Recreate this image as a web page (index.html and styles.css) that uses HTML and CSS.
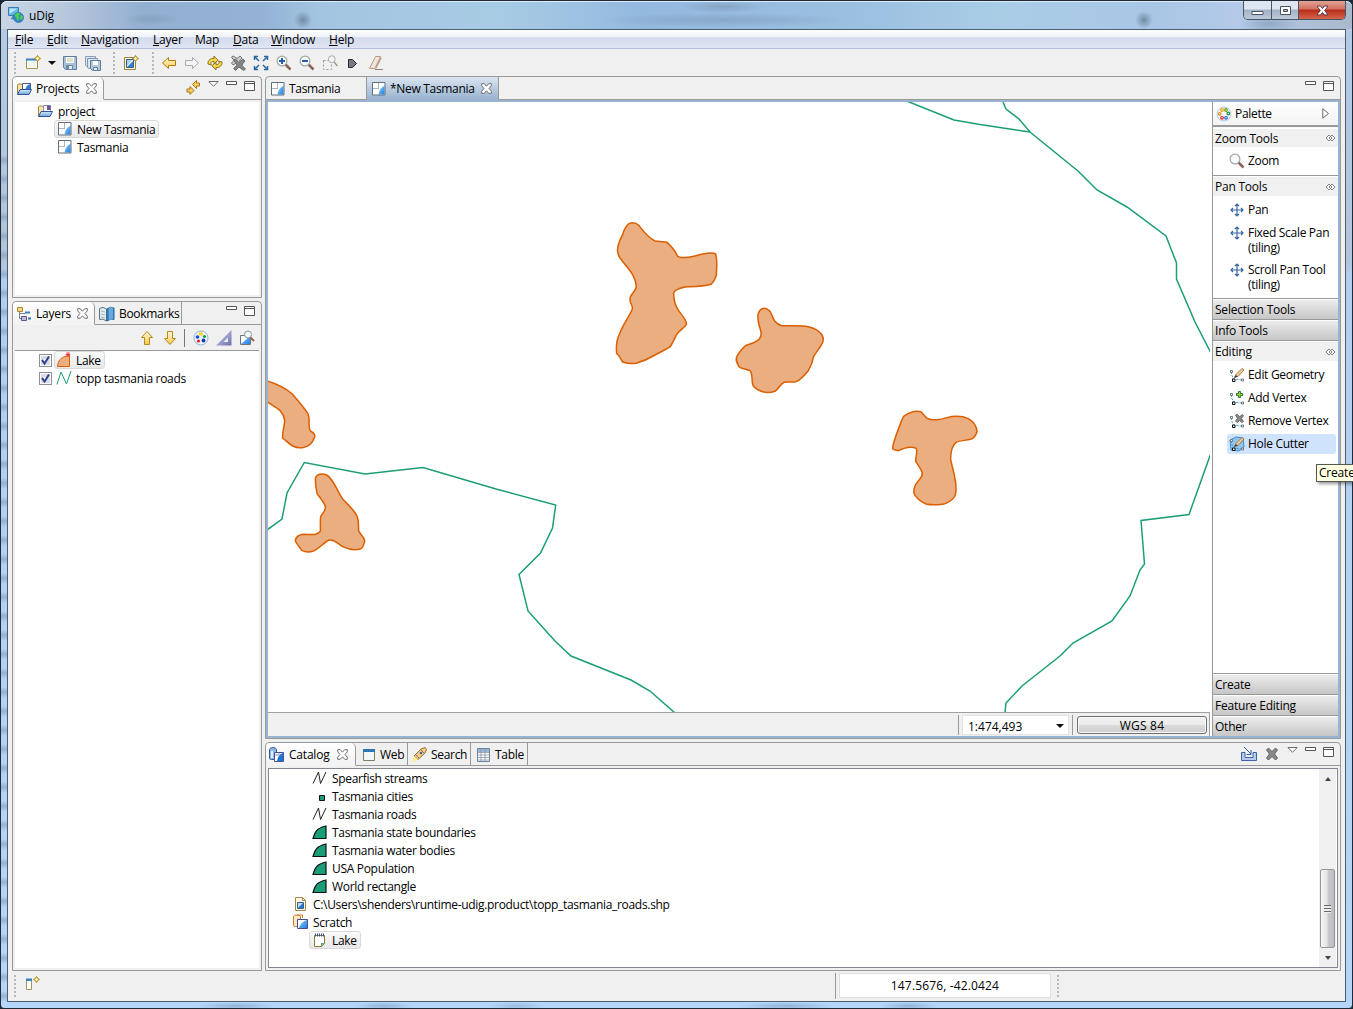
FILE: index.html
```html
<!DOCTYPE html>
<html lang="en">
<head>
<meta charset="utf-8">
<title>uDig</title>
<link rel="stylesheet" href="styles.css">
</head>
<body>
<svg class="defs" width="0" height="0" aria-hidden="true">
  <defs>
    <linearGradient id="gBlue" x1="0" y1="0" x2="1" y2="1"><stop offset="0" stop-color="#8fd0ff"/><stop offset="1" stop-color="#1f7fe0"/></linearGradient>
    <linearGradient id="gGold" x1="0" y1="0" x2="0" y2="1"><stop offset="0" stop-color="#fffbe0"/><stop offset="1" stop-color="#f5c848"/></linearGradient>
    <linearGradient id="gFolder" x1="0" y1="0" x2="0" y2="1"><stop offset="0" stop-color="#d8ebfb"/><stop offset="1" stop-color="#6ea3e0"/></linearGradient>
    <linearGradient id="gLav" x1="0" y1="0" x2="1" y2="1"><stop offset="0" stop-color="#d5d9f2"/><stop offset="1" stop-color="#6a6fae"/></linearGradient>
  </defs>
  <symbol id="app" viewBox="0 0 16 16"><path d="M.5 .5h10v8H.5z" fill="#5fb5e8" stroke="#3a7cb8"/><path d="M1.500 1.500h8L1.500 7z" fill="#b9e3fa"/><path d="M3 11.500h5M5 9v2" stroke="#4d86bb" stroke-width="1.500"/><circle cx="10.500" cy="10.500" r="5" fill="#2f86d0" stroke="#2a66a0" stroke-width=".7"/><path d="M6.500 8.500c1-3 4-3.500 6-1.500l-2 2 1 3-2 2-1-3zM12.500 8l2.500 1-1 4-2-1z" fill="#4fd04a"/></symbol>
  <symbol id="map" viewBox="0 0 14 14"><path d="M1 1h12v12H1z" fill="#fff"/><path d="M12.500 4c-3.500 1-5.500 5-6 8.500h6z" fill="url(#gBlue)"/><path d="M6.500 1v6M1 6.500h6" stroke="#a9b6bd"/><path d="M.5.500h12.500v12.500H.5z" fill="none" stroke="#5f6f7c"/></symbol>
  <symbol id="folder" viewBox="0 0 16 14"><path d="M1.500 12V3l1-1h3l1 1.500h2V12z" fill="#f8e6a8" stroke="#a8853a"/><path d="M6.500 1.500h8V9h-8z" fill="#fff" stroke="#505a8c"/><path d="M9 8c1-3 2-5 5-6v7H9z" fill="#2c7fdc"/><path d="M1.500 12.500L4 7.500h11.500L13 12.500z" fill="url(#gFolder)" stroke="#2f559d"/></symbol>
  <symbol id="project" viewBox="0 0 16 14"><path d="M1.500 12V3l1-1h3l1 1.500h2V12z" fill="#f8e6a8" stroke="#a8853a"/><path d="M6.500 1.500h7V9h-7z" fill="#fff" stroke="#8d8db0"/><path d="M10 1.500h3.500V6H10z" fill="#6c529b"/><path d="M1.500 12.500L4 7.500h11.500L13 12.500z" fill="url(#gFolder)" stroke="#2f559d"/></symbol>
  <symbol id="close" viewBox="0 0 11 11"><path d="M.7.700h2.600l2.200 2.500L7.700.700h2.600v2.100L8 5.500l2.300 2.700v2.100H7.700L5.500 7.800l-2.200 2.500H.7V8.200L3 5.500.7 2.800z" fill="#fff" stroke="#6f6f6f"/></symbol>
  <symbol id="min" viewBox="0 0 11 11"><path d="M.5 .5h10v3H.5z" fill="#fff" stroke="#555"/></symbol>
  <symbol id="max" viewBox="0 0 11 11"><path d="M.5.500h10v9H.5zM.5 2.500h10" fill="#fff" stroke="#555"/></symbol>
  <symbol id="tri" viewBox="0 0 11 11"><path d="M.8.500h9.400L5.500 5.200z" fill="#fff" stroke="#6b6b6b"/></symbol>
  <symbol id="star" viewBox="0 0 7 7"><path d="M3.500.500L4.600 2.400 6.500 3.500 4.600 4.600 3.500 6.500 2.400 4.600.500 3.500 2.400 2.400z" fill="#fff6b0" stroke="#a67c10"/></symbol>
  <symbol id="new" viewBox="0 0 16 16"><path d="M1.500 4.500h11v9h-11z" fill="#eff8fb" stroke="#ad9546"/><path d="M1 3.500h10v2H1z" fill="#3a83bd"/><use href="#star" x="9" y="0" width="7" height="7"/></symbol>
  <symbol id="save" viewBox="0 0 16 16"><path d="M1.500 1.500h13v13h-11l-2-2z" fill="#a9bfd5" stroke="#5e7d9e"/><path d="M4 2h8v6H4z" fill="#f8faf7"/><path d="M5 4h6M5 6h6" stroke="#c5c9a9"/><path d="M4.500 10.500h6v4h-6z" fill="#e4edf4" stroke="#6b86a2"/><path d="M6 11v3" stroke="#45698f" stroke-width="1.500"/></symbol>
  <symbol id="saveall" viewBox="0 0 16 16"><path d="M.5 1.500h10v10H2l-1.500-1z" fill="#dce5ec" stroke="#8ba0b2"/><path d="M2.500 3.500h10v10H4l-1.500-1z" fill="#dce5ec" stroke="#7f98ae"/><path d="M5.500 5.500h10v10h-8l-2-2z" fill="#b4c7d8" stroke="#5e7d9e"/><path d="M8 6h5v4H8z" fill="#fff"/><path d="M8.500 12.500h4v3h-4z" fill="#e4edf4" stroke="#5e7d9e"/></symbol>
  <symbol id="newmap" viewBox="0 0 16 16"><path d="M1.500 2.500h11v12h-11z" fill="#fff6d5" stroke="#9c8440"/><path d="M3.500 4.500h7v8h-7z" fill="#fff" stroke="#34608b"/><path d="M4 12l6-6v6z" fill="#2b83da"/><path d="M4 5h5L4 11z" fill="#a5d3f5"/><use href="#star" x="9" y="0" width="7" height="7"/></symbol>
  <symbol id="back" viewBox="0 0 16 16"><path d="M7.500 2.500v3h7v5h-7v3L1.500 8z" fill="url(#gGold)" stroke="#b67a10"/></symbol>
  <symbol id="fwd" viewBox="0 0 16 16"><path d="M8.500 2.500v3h-7v5h7v3L14.500 8z" fill="#f5f5f3" stroke="#aaa"/></symbol>
  <symbol id="refresh" viewBox="0 0 16 16"><path d="M1 9c-.5-4 3-6 6-5.500V1l4 4.200-4 3.600V6.500C4.500 6 3 8 4.500 10z" fill="#f5d64c" stroke="#806814" stroke-width=".9"/><path d="M15 7c.5 4-3 6-6 5.500V15l-4-4.200 4-3.600v2.300c2.500.5 4-1.500 2.500-3.500z" fill="#f5d64c" stroke="#806814" stroke-width=".9"/></symbol>
  <symbol id="stop" viewBox="0 0 16 16"><path d="M1.500 2l2-1L7 3.500 10 1l2 2-2.500 3L13 9l-2 2L6.500 8 3 10 1.500 8 4 5.500z" fill="#ccc" stroke="#777"/><path d="M3.500 5l2-1L9 7.500 13 4l2 2-3.500 4 4 4-2 1.500L9 12l-3.500 3.500-2-2L7 10z" fill="#858585" stroke="#6e6e6e"/></symbol>
  <symbol id="fit" viewBox="0 0 16 16"><path d="M1.500 5V1.500H5M11 1.500h3.500V5M14.500 11v3.500H11M5 14.500H1.500V11" fill="none" stroke="#28699f" stroke-width="1.500"/><path d="M2 2l4 4M14 2l-4 4M14 14l-4-4M2 14l4-4" stroke="#28699f" stroke-width="1.500"/></symbol>
  <symbol id="lens" viewBox="0 0 16 16"><path d="M9.500 9.500l5 5" stroke="#8c6255" stroke-width="2.500"/><circle cx="6" cy="6" r="4.900" fill="#f5fbff" stroke="#a6a7a3" stroke-width="1.200"/></symbol>
  <symbol id="zin" viewBox="0 0 16 16"><use href="#lens" width="16" height="16"/><path d="M3 6h6M6 3v6" stroke="#225caa" stroke-width="2"/></symbol>
  <symbol id="zout" viewBox="0 0 16 16"><use href="#lens" width="16" height="16"/><path d="M3 6h6" stroke="#225caa" stroke-width="2"/></symbol>
  <symbol id="zsel" viewBox="0 0 16 16"><path d="M1.500 5.500h8v9h-8z" fill="none" stroke="#999" stroke-dasharray="2 2"/><path d="M12 7l3.500 4" stroke="#9a9a9a" stroke-width="1.500"/><circle cx="9.800" cy="4.200" r="3.400" fill="#f6f6f6" stroke="#aaa"/></symbol>
  <symbol id="tag" viewBox="0 0 16 16"><path d="M3.500 4.500h4l4 4-4 4h-4z" fill="#777a84" stroke="#292929"/></symbol>
  <symbol id="eraser" viewBox="0 0 16 16"><path d="M7.500 1.500h5L7 13.500H1.500z" fill="#eee5dc" stroke="#bc9b86"/><path d="M12.500 1.500l1 2-5 10H7z" fill="#c29f8d"/><path d="M7 14.500h8" stroke="#8b817b"/></symbol>
  <symbol id="link" viewBox="0 0 14 16"><path d="M6.500 5.500l4-4v2.500h3v3h-3v2.500z" fill="#f7d25c" stroke="#ad7613"/><path d="M8 11.500l-4-4v2.500h-3v3h3v2.500z" fill="#f7d25c" stroke="#ad7613"/></symbol>
  <symbol id="layers" viewBox="0 0 16 16"><path d="M1.500 1.500h5v4h-5z" fill="#f7d889" stroke="#ae8537"/><path d="M3.500 6v6.500H6M3.500 7.500H9" fill="none" stroke="#75838c"/><path d="M9 5.500h5v2H9z" fill="#3a83bd"/><path d="M5.500 10.500h5v4h-5z" fill="#c4bddd" stroke="#5c5681"/><path d="M12 12.500h3" stroke="#2f78b4" stroke-width="2"/></symbol>
  <symbol id="book" viewBox="0 0 16 16"><path d="M.5 2.500Q4 0 7.500 3v12Q4 12 .5 13.500z" fill="#e3edf1" stroke="#5d7483"/><path d="M2 5l4 1M2 8l4 1M2 11l4 1" stroke="#a6b5bb"/><path d="M8 3q3-3 7-1v11.500q-4-1-7 1.500z" fill="#438fcd" stroke="#24619b"/><path d="M11 1v13M13 1v13" stroke="#8ac4ef"/></symbol>
  <symbol id="up" viewBox="0 0 16 16"><path d="M8 1.500L13.500 7.500h-3v7h-5v-7h-3z" fill="url(#gGold)" stroke="#b58618"/></symbol>
  <symbol id="down" viewBox="0 0 16 16"><path d="M8 14.500L13.500 8.500h-3v-7h-5v7h-3z" fill="url(#gGold)" stroke="#b58618"/></symbol>
  <symbol id="style" viewBox="0 0 16 16"><circle cx="8" cy="8" r="7" fill="#eef5fb" stroke="#92b6d4"/><path d="M6 2.500h4v3H6z" fill="#f2d80c"/><circle cx="4.500" cy="7" r="1.800" fill="#1449df"/><circle cx="5.500" cy="11" r="1.600" fill="#e12323"/><circle cx="11.500" cy="6.500" r="1.600" fill="#16a23a"/><circle cx="10.500" cy="10.500" r="1.900" fill="#1634b0"/></symbol>
  <symbol id="ruler" viewBox="0 0 16 16"><path d="M15.500 0v15.500H0zM12 7.500v4.500H7.500z" fill="url(#gLav)" fill-rule="evenodd"/></symbol>
  <symbol id="zlayer" viewBox="0 0 16 16"><path d="M1.500 5.500h10v9h-10z" fill="#fff" stroke="#6d747b"/><path d="M2 14L11 6v8z" fill="url(#gBlue)"/><path d="M11 7l4 4" stroke="#91624e" stroke-width="2"/><circle cx="9" cy="4.500" r="3.500" fill="#f3f8fa" stroke="#8e9395"/></symbol>
  <symbol id="lake" viewBox="0 0 16 16"><path d="M1.500 14.500C2 9 4 5 13.500 3.500v11z" fill="#ebae80" stroke="#d95f02"/><path d="M12 0v5M9.700 2.500h4.600M10.200.800l3.600 3.400M13.800.800l-3.600 3.400" stroke="#e5323c" stroke-width=".9"/></symbol>
  <symbol id="roads" viewBox="0 0 16 16"><path d="M1 14.500L5 2l5.500 12L15 1" fill="none" stroke="#1b9e77"/></symbol>
  <symbol id="line" viewBox="0 0 16 16"><path d="M1 13.500L6.500 2l2 11.500L14 2" fill="none" stroke="#222"/></symbol>
  <symbol id="point" viewBox="0 0 16 16"><path d="M7.500 7.500h5v5h-5z" fill="#1b9e77" stroke="#111"/></symbol>
  <symbol id="poly" viewBox="0 0 16 16"><path d="M1 14.500C3 9 3 4.500 14 2v12.500z" fill="#1b9e77" stroke="#111" stroke-width="1.200"/></symbol>
  <symbol id="shp" viewBox="0 0 16 16"><path d="M2.500 1.500h7l3 3v10h-10z" fill="#fffaea" stroke="#a58743"/><path d="M9.500 1.500v3h3" fill="none" stroke="#a58743"/><path d="M4.500 6.500h6v6h-6z" fill="#b5ddfc" stroke="#3a5f8c"/><path d="M5 12l5-5v5z" fill="#2777d2"/></symbol>
  <symbol id="scratch" viewBox="0 0 16 16"><path d="M.5 2.500C1 .5 7 .5 7.500 2.500v10h-5c-2 0-2-1-2-1z" fill="#f7e7c9" stroke="#d07b21"/><path d="M4 1h5.500v3" fill="none" stroke="#d07b21"/><path d="M4.500 5.500h10v9h-10z" fill="#fff" stroke="#4a4e8a"/><path d="M6 14c1-4 4-7 8-8v8z" fill="url(#gBlue)"/></symbol>
  <symbol id="catalog" viewBox="0 0 16 16"><path d="M.5 2.500C1 0 7 0 7.500 2.500v10h-5c-2 0-2-1-2-1z" fill="#8db8ea" stroke="#34588f"/><path d="M3 4v7" stroke="#e2effb" stroke-width="2"/><path d="M5.500 5.500h9v9h-9z" fill="#fff" stroke="#4553a0"/><path d="M8 14c1-5 3-7 6-8v8z" fill="#1e75cf"/><path d="M6 8h4V6" stroke="#a78fc7" fill="none"/></symbol>
  <symbol id="note" viewBox="0 0 16 16"><path d="M2.500 3.500h10v8l-3 3h-7z" fill="#fff" stroke="#8c7b35"/><path d="M12.500 11l-3.500 3.500V11z" fill="#54ad7c"/><path d="M3.500 1.500v3M5.500 1.500v3M7.500 1.500v3M9.500 1.500v3M11.500 1.500v3" stroke="#34558a"/></symbol>
  <symbol id="web" viewBox="0 0 14 14"><path d="M1.500 1.500h11v11h-11z" fill="#f2f8fa" stroke="#7b7f5f"/><path d="M1 1h12v3H1z" fill="#2e75b3"/></symbol>
  <symbol id="torch" viewBox="0 0 16 16"><path d="M3 9l7-7 4-1.500 1.500 2L14 6l-7 6.500z" fill="#f0c987" stroke="#9f6c2d"/><path d="M10 3l3 3M5 8l3 3" stroke="#9a7561"/><path d="M3 9l4 3.500L1 15.500z" fill="#ffef8b"/><circle cx="10" cy="6" r="1.300" fill="#376aa7"/></symbol>
  <symbol id="table" viewBox="0 0 14 14"><path d="M.5.500h12v13H.5z" fill="#fff" stroke="#6882a2"/><path d="M1 1h11v3H1z" fill="#9bb6d2"/><path d="M.5 4.500h12M.5 7h12M.5 9.500h12M.5 12h12M4 1v12M8 1v12" stroke="#8495a8" stroke-width=".8"/></symbol>
  <symbol id="import" viewBox="0 0 16 16"><path d="M1 6.500h3v5h8v-5h3.500v8H.5v-8z" fill="#b9cbed" stroke="#3d65a6"/><path d="M3 1l7 7M10 4v4.500H5.500" fill="none" stroke="#2f5f9b"/></symbol>
  <symbol id="delete" viewBox="0 0 16 16"><path d="M2.500 4l2-2L8 5.500 11.500 2l2 2-3 4 3 4-2 2L8 10.500 4.500 14l-2-2 3-4z" fill="#888" stroke="#656565"/></symbol>
  <symbol id="palette" viewBox="0 0 16 16"><circle cx="8" cy="8" r="7" fill="#f3f7ff" stroke="#b3cbea"/><g fill="#fff" stroke-width="1.200"><circle cx="6" cy="4" r="1.300" stroke="#e9a500"/><circle cx="10" cy="4" r="1.300" stroke="#65a007"/><circle cx="12.300" cy="7.500" r="1.300" stroke="#21943a"/><circle cx="10" cy="11.800" r="1.300" stroke="#2163df"/><circle cx="6" cy="11.800" r="1.300" stroke="#e72323"/><circle cx="3.700" cy="7.800" r="1.300" stroke="#ec8a00"/></g></symbol>
  <symbol id="pan" viewBox="0 0 14 14"><path d="M7 1v12M1 7h12M5 3l2-2 2 2M5 11l2 2 2-2M3 5L1 7l2 2M11 5l2 2-2 2" fill="none" stroke="#3767a4" stroke-width="1.200"/></symbol>
  <symbol id="pin" viewBox="0 0 11 8"><path d="M4 1L1 4l3 3 3-3zM7 1L4 4l3 3 3-3z" fill="#fff" fill-opacity=".4" stroke="#777" stroke-width=".9"/></symbol>
  <symbol id="vertex" viewBox="0 0 16 16"><path d="M2.500 4.500v3l2 4.500L13 13" fill="none" stroke="#48a0da" stroke-dasharray="2.500 1"/><path d="M1.500 3.500h2v2h-2zM12.500 12h2v2h-2z" fill="#fff" stroke="#777"/><path d="M3.500 12h2.500v2.500H3.500z" fill="#fff" stroke="#111"/></symbol>
  <symbol id="pencil" viewBox="0 0 16 16"><path d="M5.500 10.500L7 7.500l6-6 2 1.500-6 6.500z" fill="#efcc91" stroke="#9b6d3d" stroke-width=".9"/><path d="M5 11l2-3 1.500 1.500z" fill="#333"/></symbol>
  <symbol id="edit" viewBox="0 0 16 16"><use href="#vertex" width="16" height="16"/><use href="#pencil" width="16" height="16"/></symbol>
  <symbol id="addv" viewBox="0 0 16 16"><use href="#vertex" width="16" height="16"/><path d="M9.500 1.500h2v2h2v2h-2v2h-2v-2h-2v-2h2z" fill="#a3cf4b" stroke="#287b28"/></symbol>
  <symbol id="remv" viewBox="0 0 16 16"><use href="#vertex" width="16" height="16"/><path d="M6.500 2l2-.5L10.500 4 13 1.500l1.500 1L12.500 5.500l2 3-1.500 1-2.500-2L8 9.500 6.500 8l2-2.500z" fill="#888" stroke="#696969"/></symbol>
  <symbol id="hole" viewBox="0 0 16 16"><path d="M1 4l6-3 7 1 1 9-5 4-8-1z" fill="#8fc5f0" stroke="#3e8cd0"/><use href="#vertex" width="16" height="16"/><use href="#pencil" width="16" height="16"/></symbol>
  <symbol id="fastview" viewBox="0 0 16 16"><path d="M1.500 3.500h5v10h-5z" fill="#fff" stroke="#a29564"/><path d="M1 2.500h6v2.500H1z" fill="#3a83bd"/><use href="#star" x="8" y="0" width="7" height="7"/></symbol>
</svg>

<div class="window">
  <header class="titlebar">
    <svg class="i16"><use href="#app"/></svg>
    <span class="title">uDig</span>
    <div class="caption">
      <span class="cap"><svg width="13" height="12" viewBox="0 0 13 12"><path d="M1 6.500h11v3H1z" fill="#fff" stroke="#4b5261"/></svg></span>
      <span class="cap"><svg width="13" height="12" viewBox="0 0 13 12"><path d="M1.500 1.500h10v8h-10zM4.500 4.500h4v2h-4z" fill="#fff" fill-rule="evenodd" stroke="#4b5261"/></svg></span>
      <span class="cap cap-close"><svg width="13" height="12" viewBox="0 0 13 12"><path d="M1.500 1h3l2 2.500L8.500 1h3v1L8.600 5.500l2.900 3.500v1h-3l-2-2.500-2 2.500h-3V9l2.900-3.500L1.500 2z" fill="#fff" stroke="#5b3540"/></svg></span>
    </div>
  </header>

  <div class="client">
    <nav class="menubar">
      <span><u>F</u>ile</span><span><u>E</u>dit</span><span><u>N</u>avigation</span><span><u>L</u>ayer</span><span>Map</span><span><u>D</u>ata</span><span><u>W</u>indow</span><span><u>H</u>elp</span>
    </nav>
    <div class="toolbar">
      <i class="grip"></i>
      <div class="tools t1"><svg class="i16"><use href="#new"/></svg><i class="drop"></i><svg class="i16"><use href="#save"/></svg><svg class="i16"><use href="#saveall"/></svg></div>
      <i class="grip"></i>
      <div class="tools t2"><svg class="i16"><use href="#newmap"/></svg></div>
      <i class="grip"></i>
      <div class="tools t3">
        <svg class="i16"><use href="#back"/></svg><svg class="i16"><use href="#fwd"/></svg><svg class="i16"><use href="#refresh"/></svg><svg class="i16"><use href="#stop"/></svg><svg class="i16"><use href="#fit"/></svg><svg class="i16"><use href="#zin"/></svg><svg class="i16"><use href="#zout"/></svg><svg class="i16"><use href="#zsel"/></svg><svg class="i16"><use href="#tag"/></svg><svg class="i16"><use href="#eraser"/></svg>
      </div>
    </div>

    <main class="workbench">
      <div class="left">
        <section class="panel projects">
          <div class="tabs">
            <div class="tab active tab-projects"><svg class="folder"><use href="#folder"/></svg><span>Projects</span><svg class="x"><use href="#close"/></svg></div>
            <div class="view-tools"><svg class="link"><use href="#link"/></svg><svg class="i11"><use href="#tri"/></svg><svg class="i11"><use href="#min"/></svg><svg class="i11"><use href="#max"/></svg></div>
          </div>
          <div class="tree">
            <div class="row lvl1"><svg class="folder"><use href="#project"/></svg><span>project</span></div>
            <div class="row lvl2"><div class="pick selected"><svg class="i14"><use href="#map"/></svg><span>New Tasmania</span></div></div>
            <div class="row lvl2"><div class="pick"><svg class="i14"><use href="#map"/></svg><span>Tasmania</span></div></div>
          </div>
        </section>

        <section class="panel layers">
          <div class="tabs">
            <div class="tab active tab-layers"><svg class="i16"><use href="#layers"/></svg><span>Layers</span><svg class="x"><use href="#close"/></svg></div>
            <div class="tab tab-bookmarks"><svg class="i16"><use href="#book"/></svg><span>Bookmarks</span></div>
            <div class="view-tools"><svg class="i11"><use href="#min"/></svg><svg class="i11"><use href="#max"/></svg></div>
          </div>
          <div class="layer-tools">
            <svg class="i16"><use href="#up"/></svg><svg class="i16"><use href="#down"/></svg><i class="sep"></i><svg class="i16"><use href="#style"/></svg><svg class="i16"><use href="#ruler"/></svg><svg class="i16"><use href="#zlayer"/></svg>
          </div>
          <div class="tree layer-tree">
            <div class="row"><i class="check"><svg viewBox="0 0 11 11"><path d="M2 5l2.500 3.500L9 1.500" fill="none" stroke="#2e3f8f" stroke-width="2"/></svg></i><div class="pick selected"><svg class="i16"><use href="#lake"/></svg><span>Lake</span></div></div>
            <div class="row"><i class="check"><svg viewBox="0 0 11 11"><path d="M2 5l2.500 3.500L9 1.500" fill="none" stroke="#2e3f8f" stroke-width="2"/></svg></i><div class="pick"><svg class="i16"><use href="#roads"/></svg><span>topp tasmania roads</span></div></div>
          </div>
        </section>
      </div>

      <div class="right">
        <section class="panel editor">
          <div class="tabs">
            <div class="tab tab-tas"><svg class="i14"><use href="#map"/></svg><span>Tasmania</span></div>
            <div class="tab tab-new"><svg class="i14"><use href="#map"/></svg><span>*New Tasmania</span><svg class="x"><use href="#close"/></svg></div>
            <div class="view-tools"><svg class="i11"><use href="#min"/></svg><svg class="i11"><use href="#max"/></svg></div>
          </div>
          <div class="editor-body">
            <div class="map-area">
              <svg class="map" viewBox="268 102 942 610">
                <g class="road">
                  <path d="M908 101.500L954 120 980 124.500 1030 132"/>
                  <path d="M1003 102L1006 109 1019 119 1030 132 1078 171 1097 190 1127 207 1166 236 1176.500 263 1176.500 279 1195 322 1211 353"/>
                  <path d="M1211 453L1189 514.500 1141 520.500 1144.500 564 1140 570 1130 596 1112 621 1073 643 1060 656 1022 686 1006 703 1005 713"/>
                  <path d="M267 530L282 519 287 493 304.300 462.500 365 474 423 467.500 496 489 555.700 505 552.500 528 540.500 553 519 574.500 528 611 555 641 571 656 631 680 650 691 675 713"/>
                </g>
                <g class="water">
                  <path transform="translate(600 210) scale(.33333)" d="M88 40C96 37 108 38 116 46C128 60 140 80 165 93L201 97C215 110 226 122 232 137C240 147 262 143 285 138C305 132 330 124 346 131C353 145 350 170 349 196C345 208 340 217 333 223C310 230 280 230 255 231C235 235 222 240 221 250C221 275 228 292 238 305C248 318 262 333 259 344C250 356 238 362 230 373C222 390 216 402 210 411C195 421 180 426 165 435C145 447 125 455 108 460C95 462 80 460 68 456C62 448 58 436 50 430C47 400 52 385 62 363C72 340 88 318 97 297C99 285 90 283 90 268C88 255 108 245 109 230C107 195 85 178 60 144C50 130 50 115 58 95C62 82 70 75 71 64C75 55 80 45 88 40Z"/>
                  <path transform="translate(600 210) scale(.33333)" d="M474 313C478 300 486 295 494 295C504 298 510 300 513 310C520 325 522 340 545 347C575 348 600 345 625 350C645 355 657 363 664 372C672 385 672 390 664 405C655 420 645 430 640 442C638 455 632 470 625 482C615 493 605 508 588 515C575 518 565 514 552 517C540 523 535 538 525 544C510 549 495 549 482 543C468 538 458 528 457 518C456 505 457 490 450 482C440 477 425 478 417 470C410 458 406 450 411 438C418 428 425 415 438 406C455 400 470 397 478 387C488 375 482 360 477 345C474 332 473 323 474 313Z"/>
                  <path transform="translate(880 400) scale(.33333)" d="M72 48C82 40 105 30 122 35C130 41 134 50 142 55C155 62 180 60 200 53C220 48 245 47 265 56C280 65 290 78 291 95C288 105 282 115 272 118C255 122 240 121 228 127C215 137 212 155 212 178C217 205 228 235 228 262C229 275 226 290 218 297C208 305 200 312 188 313C170 315 150 315 138 312C120 305 105 290 102 280C98 262 110 248 121 235C133 222 126 212 107 184C108 165 113 155 109 145C95 139 75 142 55 152C45 150 38 150 38 145C38 130 50 100 67 56Z"/>
                  <path transform="translate(260 370) scale(.33333)" d="M5 27L24 34C50 42 80 58 97 72C110 87 130 110 144 131C152 150 142 165 151 183C160 187 166 192 164 202C158 218 145 232 127 233C100 236 90 222 68 204C66 185 75 165 74 150C68 118 45 112 24 97L5 86Z"/>
                  <path transform="translate(260 370) scale(.33333)" d="M166 325C170 312 185 309 200 315C220 325 232 365 248 387C265 405 280 418 290 436C297 450 295 465 296 483C303 495 315 505 314 514C310 525 310 533 303 536C285 542 265 538 248 530C230 520 225 508 208 510C195 514 180 535 158 544C145 548 135 546 125 541C118 530 108 520 106 512C108 500 118 494 130 493C150 493 170 498 181 484C182 470 180 455 182 440C187 430 197 425 196 410C192 395 180 385 171 370C167 355 166 340 166 325Z"/>
                </g>
              </svg>
              <div class="map-status">
                <div class="scale"><span>1:474,493</span><i class="drop"></i></div>
                <i class="vsep"></i>
                <div class="crs">WGS 84</div>
              </div>
            </div>
            <aside class="palette">
              <div class="pal-title"><svg class="i16"><use href="#palette"/></svg><span>Palette</span><svg width="8" height="11" viewBox="0 0 8 11"><path d="M.8.800v9.400L6.500 5.500z" fill="#fff" stroke="#6b6b6b"/></svg></div>
              <div class="drawer open"><span>Zoom Tools</span><svg class="pin"><use href="#pin"/></svg></div>
              <div class="pal-items zoom"><div class="item"><svg class="i16"><use href="#lens"/></svg><span>Zoom</span></div></div>
              <div class="drawer open"><span>Pan Tools</span><svg class="pin"><use href="#pin"/></svg></div>
              <div class="pal-items pans">
                <div class="item"><svg class="i14"><use href="#pan"/></svg><span>Pan</span></div>
                <div class="item two"><svg class="i14"><use href="#pan"/></svg><span>Fixed Scale Pan<br>(tiling)</span></div>
                <div class="item two"><svg class="i14"><use href="#pan"/></svg><span>Scroll Pan Tool<br>(tiling)</span></div>
              </div>
              <div class="drawer"><span>Selection Tools</span></div>
              <div class="drawer"><span>Info Tools</span></div>
              <div class="drawer open"><span>Editing</span><svg class="pin"><use href="#pin"/></svg></div>
              <div class="pal-items editing">
                <div class="item"><svg class="i16"><use href="#edit"/></svg><span>Edit Geometry</span></div>
                <div class="item"><svg class="i16"><use href="#addv"/></svg><span>Add Vertex</span></div>
                <div class="item"><svg class="i16"><use href="#remv"/></svg><span>Remove Vertex</span></div>
                <div class="item hot"><svg class="i16"><use href="#hole"/></svg><span>Hole Cutter</span></div>
              </div>
              <div class="drawer"><span>Create</span></div>
              <div class="drawer"><span>Feature Editing</span></div>
              <div class="drawer"><span>Other</span></div>
            </aside>
          </div>
        </section>

        <section class="panel catalog">
          <div class="tabs">
            <div class="tab active tab-catalog"><svg class="i16"><use href="#catalog"/></svg><span>Catalog</span><svg class="x"><use href="#close"/></svg></div>
            <div class="tab tab-web"><svg class="i14"><use href="#web"/></svg><span>Web</span></div>
            <div class="tab tab-search"><svg class="i16"><use href="#torch"/></svg><span>Search</span></div>
            <div class="tab tab-table"><svg class="i14"><use href="#table"/></svg><span>Table</span></div>
            <div class="view-tools"><svg class="i16"><use href="#import"/></svg><svg class="i16"><use href="#delete"/></svg><svg class="i11"><use href="#tri"/></svg><svg class="i11"><use href="#min"/></svg><svg class="i11"><use href="#max"/></svg></div>
          </div>
          <div class="catalog-box">
            <div class="catalog-tree">
              <div class="row c2"><svg class="i16"><use href="#line"/></svg><span>Spearfish streams</span></div>
              <div class="row c2"><svg class="i16"><use href="#point"/></svg><span>Tasmania cities</span></div>
              <div class="row c2"><svg class="i16"><use href="#line"/></svg><span>Tasmania roads</span></div>
              <div class="row c2"><svg class="i16"><use href="#poly"/></svg><span>Tasmania state boundaries</span></div>
              <div class="row c2"><svg class="i16"><use href="#poly"/></svg><span>Tasmania water bodies</span></div>
              <div class="row c2"><svg class="i16"><use href="#poly"/></svg><span>USA Population</span></div>
              <div class="row c2"><svg class="i16"><use href="#poly"/></svg><span>World rectangle</span></div>
              <div class="row c1"><svg class="i16"><use href="#shp"/></svg><span>C:\Users\shenders\runtime-udig.product\topp_tasmania_roads.shp</span></div>
              <div class="row c1"><svg class="i16"><use href="#scratch"/></svg><span>Scratch</span></div>
              <div class="row c2"><div class="pick selected"><svg class="i16"><use href="#note"/></svg><span>Lake</span></div></div>
            </div>
            <div class="scrollbar"><i class="arrow up"></i><i class="thumb"></i><i class="arrow down"></i></div>
          </div>
        </section>
      </div>
    </main>

    <footer class="statusbar">
      <i class="grip"></i><svg class="i16"><use href="#fastview"/></svg>
      <i class="vsep"></i><div class="coords">147.5676, -42.0424</div><i class="grip"></i>
    </footer>
  </div>
</div>
<div class="tooltip">Create</div>
</body>
</html>
```
FILE: styles.css
```css
* { box-sizing: border-box; }
html, body { margin: 0; width: 1353px; height: 1009px; overflow: hidden; }
body {
  position: relative;
  background: #1d2733;
  color: #000;
  font: 12px/15px "Open Sans", "Noto Sans", sans-serif;
  letter-spacing: -0.31px;
  white-space: nowrap;
}
svg { display: block; flex: none; }
.defs { position: absolute; }
i { display: block; flex: none; }
.i16 { width: 16px; height: 16px; }
.i14 { width: 14px; height: 14px; }
.i11 { width: 11px; height: 11px; }
.x { width: 11px; height: 11px; }
.folder { width: 16px; height: 14px; }
.link { width: 14px; height: 16px; }
.pin { width: 11px; height: 8px; }

/* window frame */
.window {
  display: flex;
  flex-direction: column;
  width: 1353px;
  height: 1009px;
  padding: 0 7px 7px;
  border: 1px solid #1f2a36;
  border-radius: 7px 7px 4px 4px;
  background:
    radial-gradient(ellipse 40px 4px at 235px 1005px, #6f94bb88, transparent),
    radial-gradient(ellipse 30px 4px at 383px 1005px, #6f94bb88, transparent),
    radial-gradient(ellipse 30px 4px at 516px 1005px, #6f94bb66, transparent),
    radial-gradient(ellipse 50px 4px at 785px 1005px, #6f94bb88, transparent),
    radial-gradient(ellipse 30px 4px at 908px 1005px, #6f94bb88, transparent),
    repeating-linear-gradient(#7d9cbd00 0 4px, #7d9cbd99 9px, #7d9cbd00 15px 19px) 0 150px / 7px 850px no-repeat,
    linear-gradient(180deg, #b4cbe6 0, #b2c4d8 260px, #b0cff0 275px, #b5d6f8 1009px);
}
.titlebar {
  display: flex;
  align-items: flex-start;
  height: 28px;
  margin: 0 -7px;
  padding: 6px 6px 0 7px;
  border-top: 1px solid #dcecf9;
  border-radius: 6px 6px 0 0;
  background:
    radial-gradient(circle at 302px 18px, #708ba5 0, #708ba588 4px, transparent 9px),
    radial-gradient(circle at 1143px 18px, #708ba5 0, #708ba588 4px, transparent 9px),
    radial-gradient(ellipse 28px 6px at 150px 17px, #7c95b188, transparent),
    radial-gradient(ellipse 42px 6px at 722px 5px, #7c95b199, transparent),
    radial-gradient(ellipse 125px 7px at 722px 18px, #7c95b188, transparent),
    radial-gradient(ellipse 30px 10px at 1268px 22px, #7c95b199, transparent),
    linear-gradient(90deg, #c8d6e4 0, #b9c9dd 60px, #93b0d2 140px, #93b2d6 260px, #a4c5e1 320px, #a8cbe4 500px, #93b9df 640px, #9abfe0 850px, #aacde6 1000px, #a9c6e6 1150px, #b4cae8 1240px, #a9b9cb 1353px);
}
.titlebar .i16 { margin-top: -1px; }
.title { margin-left: 5px; line-height: 15px; letter-spacing: -.2px; }
.caption {
  display: flex;
  margin: -7px 0 0 auto;
  height: 19px;
  border: 1px solid #46566a;
  border-top: 0;
  border-radius: 0 0 5px 5px;
  overflow: hidden;
}
.cap {
  display: grid;
  place-items: center;
  width: 27px;
  padding-top: 2px;
  border-right: 1px solid #46566a;
  background: linear-gradient(#dde6ef 0 45%, #a2b1c4 50%, #bdcad9);
}
.cap:first-child { width: 28px; }
.cap-close { width: 46px; border-right: 0; background: linear-gradient(#e3a396 0, #d27060 45%, #b72c16 50%, #d5654d); }
.client {
  display: flex;
  flex-direction: column;
  flex: 1;
  margin: 0 -1px -1px;
  border: 1px solid #4d5d70;
  background: #f0f0f0;
}

.menubar {
  display: grid;
  grid-template-columns: 32px 34px 72px 42px 38px 38px 58px auto;
  height: 19px;
  padding: 2px 0 0 7px;
  border-bottom: 1px solid #b6bfd8;
  background: linear-gradient(#fff 0, #eef1f8 40%, #d4dbed 42%, #dfe5f3);
  letter-spacing: -.2px;
}
.toolbar { display: flex; align-items: center; height: 27px; padding-left: 6px; }
.grip { width: 2px; height: 22px; background: repeating-linear-gradient(#b6b6b6 0 2px, transparent 2px 4px); }
.tools { display: flex; align-items: center; }
.t1 { padding: 0 12px 0 9px; }
.t1 .drop { margin: 0 6px 0 7px; }
.t1 .i16:nth-child(3) { margin-right: 7px; }
.t2 { padding: 0 13px 0 8px; }
.t3 { gap: 7px; padding-left: 7px; }
.drop { width: 0; height: 0; border: 4px solid transparent; border-top-color: #111; border-bottom: 0; }

/* view stacks */
.workbench { display: flex; gap: 3px; height: 895px; padding: 0 4px; }
.left { display: flex; flex-direction: column; gap: 3px; width: 250px; }
.right { display: flex; flex-direction: column; gap: 3px; width: 1076px; }
.panel { display: flex; flex-direction: column; border: 1px solid #999; border-radius: 4px 4px 0 0; background: #f0f0f0; }
.projects { height: 222px; }
.layers { height: 670px; }
.editor { height: 663px; }
.catalog { height: 229px; }
.tabs { display: flex; height: 23px; flex: none; border-bottom: 1px solid #999; }
.tab { display: flex; align-items: center; height: 23px; margin-bottom: -1px; padding: 1px 0 0 3px; border-right: 1px solid #999; border-bottom: 1px solid #999; }
.tab.active { border-bottom-color: #f5f5f5; background: linear-gradient(#fff, #f2f2f2); border-radius: 4px 5px 0 0; }
.tab span { margin-left: 4px; }
.tab .x { margin-left: auto; margin-right: 6px; }
.tab-projects { width: 91px; }
.tab-projects span, .tab-layers span, .tab-catalog span { letter-spacing: -.2px; }
.tab-layers { width: 82px; }
.tab-bookmarks { width: 87px; padding-left: 4px; }
.view-tools { display: flex; gap: 7px; margin: 4px 6px 0 auto; }
.view-tools .i16 { margin-top: -1px; }
.projects .link { margin: -2px 1px 0 0; }
.tree { flex: 1; margin: 2px; background: #fff; }
.row { display: flex; align-items: center; height: 18px; }
.row span { margin-left: 4px; }
.lvl1 { padding-left: 22px; }
.lvl1 span { margin-left: 5px; }
.lvl2 { padding-left: 39px; }
.pick { display: flex; align-items: center; height: 18px; padding: 0 3px; border: 1px solid transparent; border-radius: 3px; }
.lvl2 .pick span { margin-left: 5px; }
.selected { border-color: #d9d9d9; background: linear-gradient(#fafafa, #e8e8e8); }
.layer-tools { display: flex; align-items: center; gap: 7px; height: 26px; margin: 0 2px; padding: 0 4px 0 124px; border-bottom: 1px solid #999; }
.layer-tools .sep { width: 1px; height: 18px; margin-left: -1px; margin-right: 1px; background: #777; }
.layer-tree { margin-top: 0; }
.layer-tree .row { padding-left: 24px; }
.layer-tree .pick { padding-left: 1px; margin-left: 2px; }
.check { width: 13px; height: 13px; border: 1px solid #8e8f8f; background: #fff; box-shadow: inset 0 0 0 1px #fff, inset 0 0 0 4px #d8dde6; }

/* map editor */
.tab-tas { width: 101px; padding-left: 5px; }
.tab-new { width: 132px; padding-left: 5px; border-bottom-color: #99b4d1; background: linear-gradient(#dbe5f0, #99b4d1); }
.editor-body { display: flex; flex: 1; padding: 2px; background: #99b4d1; }
.map-area { display: flex; flex-direction: column; width: 944px; background: #fff; }
.map { width: 942px; height: 610px; }
.road { fill: none; stroke: #1b9e77; stroke-width: 1.500; }
.water { fill: #ebae80; stroke: #d95f02; stroke-width: 4.500; }
.map-status { display: flex; justify-content: flex-end; width: 942px; height: 24px; padding-right: 2px; border-top: 1px solid #a0a0a0; border-right: 1px solid #a0a0a0; background: #f0f0f0; }
.scale { display: flex; align-items: center; justify-content: space-between; width: 107px; height: 20px; margin: 2px 3px 0 0; padding: 2px 4px 0 5px; border: 1px solid #e3e3e3; background: #fff; letter-spacing: 0; }
.map-status::before { content: ""; width: 1px; height: 20px; margin: 2px 3px 0 0; background: #999; }
.vsep { width: 1px; height: 20px; background: #999; }
.map-status .vsep { margin: 2px 4px 0 0; }
.crs { width: 130px; height: 18px; margin-top: 3px; border: 1px solid #707070; border-radius: 3px; background: linear-gradient(#f2f2f2 0, #ebebeb 48%, #dadada 52%, #cfcfcf); text-align: center; line-height: 17px; box-shadow: inset 0 0 0 1px #fafafa; letter-spacing: .2px; }
.palette { display: flex; flex-direction: column; flex: 1; border-left: 1px solid #999; background: #fff; }
.pal-title { display: flex; align-items: center; height: 25px; padding: 0 8px 0 3px; border-bottom: 2px solid #999; background: linear-gradient(#fff, #f3f3f3); }
.pal-title span { flex: 1; margin-left: 3px; }
.drawer { display: flex; align-items: center; justify-content: space-between; height: 21px; flex: none; padding: 1px 2px 0 2px; border-top: 1px solid #999; background: linear-gradient(#fff 0 1px, #ececec 1px, #c6c6c6); letter-spacing: -.22px; }
.drawer.open { background: #f0f0f0; box-shadow: inset 0 1px #fff; }
.pal-title + .drawer { height: 20px; border-top: 1px solid #f8f8f8; }
.pal-items { padding-left: 14px; }
.item { display: flex; height: 23px; padding: 3px 0 0 2px; }
.item span { margin-left: 3px; }
.item .i14 { margin: 1px 1px 0; }
.item.two { height: 37px; }
.zoom { height: 28px; padding-top: 3px; }
.pans { height: 102px; padding-top: 3px; }
.pal-items.editing { flex: 1; padding-top: 3px; }
.hot { width: 109px; height: 20px; margin-top: 1px; padding-top: 2px; border-radius: 3px; background: #cfe3fc; }

/* catalog */
.tab-catalog { width: 90px; }
.tab-catalog .x { margin-right: 7px; }
.tab-web { width: 52px; padding-left: 6px; }
.tab-search { width: 63px; }
.tab-search span { margin-left: 4px; }
.tab-table { width: 57px; padding-left: 6px; }
.catalog-box { display: flex; flex: 1; margin: 2px; border: 1px solid #828790; background: #fff; }
.catalog-tree { flex: 1; }
.c1 { padding-left: 24px; }
.c2 { padding-left: 43px; }
.c2 .pick { margin-left: -3px; padding-left: 2px; }
.scrollbar { display: flex; flex-direction: column; align-items: center; width: 17px; margin-right: 1px; background: #f0f0f0; }
.arrow { width: 0; height: 0; border: 3.500px solid transparent; }
.arrow.up { margin-top: 8px; border-top: 0; border-bottom: 4px solid #444; }
.arrow.down { margin-top: 8px; border-bottom: 0; border-top: 4px solid #444; }
.thumb { width: 15px; height: 79px; margin-top: 88px; border: 1px solid #979797; border-radius: 2px; background: repeating-linear-gradient(#666 0 1px, #eee 1px 3px) center / 7px 8px no-repeat, linear-gradient(90deg, #f5f5f5 0, #e6e6e8 45%, #c9cacd 55%, #bcbdc2); }

.statusbar { display: flex; flex: 1; padding: 4px 0 0 6px; }
.statusbar .i16 { margin: 1px 0 0 9px; }
.statusbar > .vsep { height: 26px; margin: -2px 3px 0 794px; }
.coords { width: 212px; height: 25px; margin: -2px 6px 0 0; border: 1px solid #dfdfdf; background: #fff; line-height: 23px; text-align: center; letter-spacing: .15px; }

.tooltip { position: absolute; left: 1316px; top: 464px; width: 60px; height: 18px; padding-left: 2px; border: 1px solid #555; background: #ffffe1; box-shadow: 2px 2px 3px #0006; line-height: 16px; letter-spacing: -.2px; }
```
